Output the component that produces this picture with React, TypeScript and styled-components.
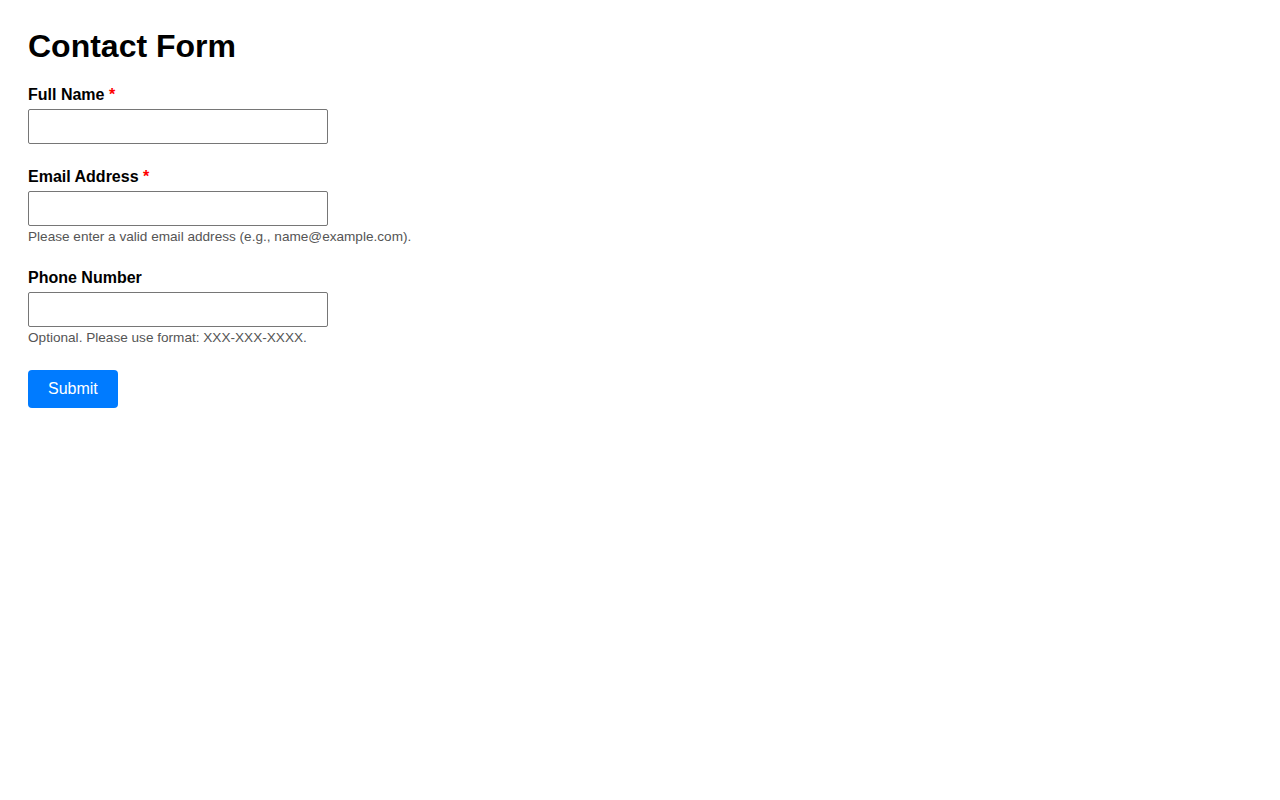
import React from "react";
import styled, { createGlobalStyle } from "styled-components";

const GlobalStyle = createGlobalStyle`
  body {
    margin: 0;
    background: #fff;
    color: #000;
    font-family: "Liberation Sans", Arial, Helvetica, sans-serif;
  }
`;

type Field = {
  id: string;
  label: string;
  type: string;
  required?: boolean;
  hint?: string;
};

const fields: Field[] = [
  { id: "fullName", label: "Full Name", type: "text", required: true },
  {
    id: "email",
    label: "Email Address",
    type: "email",
    required: true,
    hint: "Please enter a valid email address (e.g., name@example.com).",
  },
  {
    id: "phone",
    label: "Phone Number",
    type: "tel",
    hint: "Optional. Please use format: XXX-XXX-XXXX.",
  },
];

const App: React.FC = () => {
  return (
    <>
      <GlobalStyle />
      <Page>
        <Title>Contact Form</Title>
        <Form onSubmit={(e) => e.preventDefault()} noValidate>
          {fields.map((f) => (
            <Group key={f.id}>
              <Label htmlFor={f.id}>
                {f.label}
                {f.required && <Required> *</Required>}
              </Label>
              <Input id={f.id} name={f.id} type={f.type} />
              {f.hint && <Hint>{f.hint}</Hint>}
            </Group>
          ))}
          <SubmitButton type="submit">Submit</SubmitButton>
        </Form>
      </Page>
    </>
  );
};

export default App;

const Page = styled.main`
  padding: 28px;
`;

const Title = styled.h1`
  margin: 0 0 21px;
  font-size: 32px;
  font-weight: 700;
  line-height: 37px;
`;

const Form = styled.form`
  display: flex;
  flex-direction: column;
  align-items: flex-start;
`;

const Group = styled.div`
  display: flex;
  flex-direction: column;
  align-items: flex-start;
  margin-bottom: 24px;
`;

const Label = styled.label`
  font-size: 16px;
  font-weight: 700;
  line-height: 18px;
  margin-bottom: 5px;
`;

const Required = styled.span`
  color: #ff0000;
`;

const Input = styled.input`
  box-sizing: border-box;
  width: 300px;
  height: 35px;
  padding: 8px;
  border: 1px solid #767676;
  border-radius: 2px;
  font-family: inherit;
  font-size: 16px;
`;

const Hint = styled.small`
  margin-top: 3px;
  font-size: 13.6px;
  line-height: 16px;
  color: #555;
`;

const SubmitButton = styled.button`
  padding: 0 20px;
  height: 38px;
  border: none;
  border-radius: 4px;
  background: #007bff;
  color: #fff;
  font-family: inherit;
  font-size: 16px;
  cursor: pointer;
`;
